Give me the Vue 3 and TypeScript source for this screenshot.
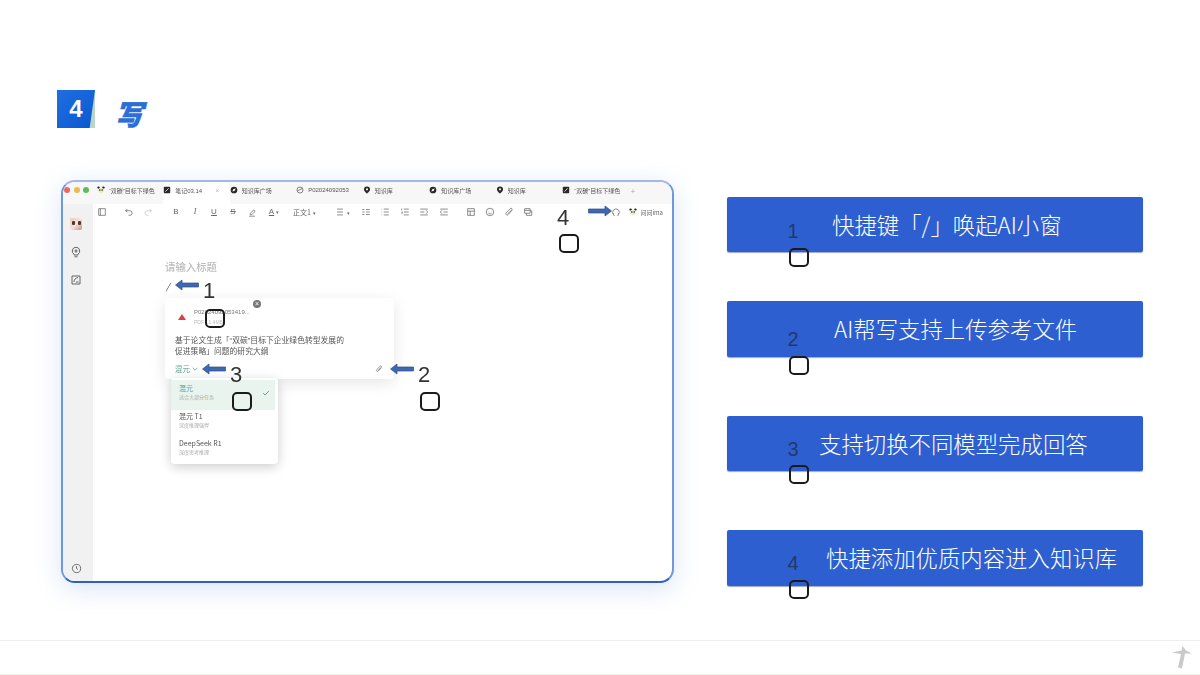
<script setup lang="ts">
interface Tab { kind: string; label: string; active?: boolean }
const tabs: Tab[] = [
  { kind: 'panda', label: '“双碳”目标下绿色' },
  { kind: 'note', label: '笔记03.14', active: true },
  { kind: 'dark', label: '知识库广场' },
  { kind: 'pdf', label: 'P02024092053' },
  { kind: 'pin', label: '知识库' },
  { kind: 'dark', label: '知识库广场' },
  { kind: 'pin', label: '知识库' },
  { kind: 'note', label: '“双碳”目标下绿色' },
]
const ic: Record<string, string> = {
  panel: 'M4 4h16v16H4zM8 4v16',
  undo: 'M8 5 4 9l4 4M4 9h10a5 5 0 0 1 0 11h-3',
  redo: 'M16 5l4 4-4 4M20 9H10a5 5 0 0 0 0 11h3',
  mark: 'M8 15l8-8a3 3 0 0 1 2 5l-6 6H8zM5 22h14',
  list: 'M5 5h14M5 12h14M5 19h14',
  todo: 'M3 6h5M3 18h5M12 6h9M12 18h9M12 12h9M3 12h5',
  ul: 'M4 5h1M4 12h1M4 19h1M9 5h12M9 12h12M9 19h12',
  ol: 'M4 4v4M4 12h2l-2 3h2M9 5h12M9 12h12M9 19h12',
  indent: 'M3 5h18M3 19h18M3 12h10M17 8l4 4-4 4',
  outdent: 'M3 5h18M3 19h18M11 12h10M7 8l-4 4 4 4',
  table: 'M4 4h16v16H4zM4 10h16M10 10v10',
  emoji: 'M12 3a9 9 0 1 0 0 18 9 9 0 0 0 0-18zM8 10h.5M15.5 10h.5M8 14.500c2 2.500 6 2.500 8 0',
  clip: 'M19 8 10 18a3 3 0 0 1-5-4L15 4a2 2 0 0 1 4 3L9 16',
  copy: 'M4 4h13v11H4zM8 15v5h13V9h-4M4 8h13',
  refresh: 'M6 18a8 8 0 1 1 12 0M6 18v-3M6 20h3M18 18v-3M18 20h-3',
  bulb: 'M12 2.500a7.500 7.500 0 0 0-4 13.800V18h8v-1.700A7.500 7.500 0 0 0 12 2.500zM9 21.500h6M12 6.500v7M8.500 10h7',
  edit: 'M4 4h16v16H4zM8 16c0-5 3-8 8-9M12 16h5',
  clock: 'M12 3a9 9 0 1 0 0 18 9 9 0 0 0 0-18zM12 7v5l3 2',
}
const group3 = ['B', 'I', 'U', 'S']
const group5 = ['todo', 'ul', 'ol', 'indent', 'outdent']
const group6 = ['table', 'emoji', 'clip', 'copy']
const models = [
  { name: '混元', sub: '适合大部分任务', on: true },
  { name: '混元 T1', sub: '深度推理强悍' },
  { name: 'DeepSeek R1', sub: '深度思考推理' },
]
const cards = [
  { text: '快捷键「/」唤起AI小窗', pad: 105, gap: 0, h: 55 },
  { text: 'AI帮写支持上传参考文件', pad: 107, gap: 49, h: 56 },
  { text: '支持切换不同模型完成回答', pad: 92, gap: 59, h: 55 },
  { text: '快捷添加优质内容进入知识库', pad: 99, gap: 59, h: 56 },
]
const marks = [
  { n: '1', x: 209, y: 291, bx: 205, by: 309, dark: false },
  { n: '2', x: 424, y: 375, bx: 420, by: 392, dark: false },
  { n: '3', x: 236, y: 375, bx: 232, by: 392, dark: false },
  { n: '4', x: 563, y: 218, bx: 559, by: 234, dark: false },
  { n: '1', x: 793, y: 231, bx: 789, by: 248, dark: true },
  { n: '2', x: 793, y: 339, bx: 789, by: 356, dark: true },
  { n: '3', x: 793, y: 449, bx: 789, by: 465, dark: true },
  { n: '4', x: 793, y: 563, bx: 789, by: 580, dark: true },
]
const arrows = [
  { x: 175, y: 279, flip: false },
  { x: 390, y: 363, flip: false },
  { x: 202, y: 363, flip: false },
  { x: 588, y: 205, flip: true },
]
</script>

<template>
  <div class="slide">
    <header class="head">
      <div class="badge-wrap">
        <div class="badge-shadow"></div>
        <div class="badge">4</div>
      </div>
      <h1 class="title">写</h1>
    </header>

    <main class="main">
      <section class="win">
        <div class="tabbar">
          <div class="lights"><i class="r"></i><i class="y"></i><i class="g"></i></div>
          <div v-for="(t, i) in tabs" :key="i" class="tab" :class="{ active: t.active }">
            <svg v-if="t.kind === 'panda'" class="tico" viewBox="0 0 10 10">
              <circle cx="2" cy="2" r="1.500" fill="#222" /><circle cx="8" cy="2" r="1.500" fill="#222" />
              <circle cx="5" cy="5.500" r="3.500" fill="#e8efc8" /><circle cx="3.500" cy="5" r="1" fill="#222" /><circle cx="6.500" cy="5" r="1" fill="#222" />
            </svg>
            <svg v-else-if="t.kind === 'note'" class="tico" viewBox="0 0 10 10">
              <rect x="1" y="1" width="8" height="8" rx="1" fill="#2a2a2a" /><path d="M3 7l4-4" stroke="#fff" stroke-width="1" />
            </svg>
            <svg v-else-if="t.kind === 'dark'" class="tico" viewBox="0 0 10 10">
              <circle cx="5" cy="5" r="4.200" fill="#2a2a2a" /><path d="M3 7l1-3 3-1-1 3z" fill="#fff" />
            </svg>
            <svg v-else-if="t.kind === 'pdf'" class="tico" viewBox="0 0 10 10">
              <circle cx="5" cy="5" r="3.800" fill="none" stroke="#666" stroke-width="1" /><path d="M2 6l6-3" stroke="#666" />
            </svg>
            <svg v-else class="tico" viewBox="0 0 10 10">
              <path d="M5 .5a3.800 3.800 0 0 1 3.800 3.800C8.800 6.500 5 9.500 5 9.500S1.200 6.500 1.200 4.300A3.800 3.800 0 0 1 5 .5z" fill="#2a2a2a" /><circle cx="5" cy="4.200" r="1.300" fill="#fff" />
            </svg>
            <span class="tlabel">{{ t.label }}</span>
            <span v-if="t.active" class="tclose">×</span>
          </div>
          <span class="plus">+</span>
        </div>

        <div class="body">
          <aside class="side">
            <div class="avatar"><i></i><i></i></div>
            <svg class="sico" viewBox="0 0 24 24"><path :d="ic.bulb" /></svg>
            <svg class="sico" viewBox="0 0 24 24"><path :d="ic.edit" /></svg>
            <svg class="sico clock" viewBox="0 0 24 24"><path :d="ic.clock" /></svg>
          </aside>

          <div class="doc">
            <div class="toolbar">
              <svg class="ico" viewBox="0 0 24 24"><path :d="ic.panel" /></svg>
              <div class="grp g2">
                <svg class="ico" viewBox="0 0 24 24"><path :d="ic.undo" /></svg>
                <svg class="ico light" viewBox="0 0 24 24"><path :d="ic.redo" /></svg>
              </div>
              <div class="grp g3">
                <span v-for="c in group3" :key="c" class="fmt" :class="'f' + c">{{ c }}</span>
                <svg class="ico" viewBox="0 0 24 24"><path :d="ic.mark" /></svg>
                <span class="fmt fA">A<em>▾</em></span>
              </div>
              <span class="para">正文1<em>▾</em></span>
              <span class="lst">
                <svg class="ico" viewBox="0 0 24 24"><path :d="ic.list" /></svg><em>▾</em>
              </span>
              <div class="grp g5">
                <svg v-for="k in group5" :key="k" class="ico" viewBox="0 0 24 24"><path :d="ic[k]" /></svg>
              </div>
              <div class="grp g6">
                <svg v-for="k in group6" :key="k" class="ico" viewBox="0 0 24 24"><path :d="ic[k]" /></svg>
              </div>
              <div class="tright">
                <svg class="ico" viewBox="0 0 24 24"><path :d="ic.refresh" /></svg>
                <span class="ima">
                  <svg class="tico" viewBox="0 0 10 10">
                    <circle cx="2" cy="2" r="1.500" fill="#222" /><circle cx="8" cy="2" r="1.500" fill="#222" />
                    <circle cx="5" cy="5.500" r="3.500" fill="#e8efc8" /><circle cx="3.500" cy="5" r="1" fill="#222" /><circle cx="6.500" cy="5" r="1" fill="#222" />
                  </svg>问问ima
                </span>
              </div>
            </div>

            <div class="editor">
              <div class="doc-title">请输入标题</div>
              <div class="slash">/</div>
              <div class="popup">
                <span class="pclose">×</span>
                <div class="file">
                  <div class="fthumb"><i></i></div>
                  <div>
                    <div class="fname">P02024092053419...</div>
                    <div class="fmeta">PDF · 1.4MB</div>
                  </div>
                </div>
                <p class="prompt">基于论文生成「“双碳”目标下企业绿色转型发展的<br />促进策略」问题的研究大纲</p>
                <div class="pfoot">
                  <span class="model">混元
                    <svg viewBox="0 0 10 10"><path d="M2 3.500 5 6.500 8 3.500" /></svg>
                  </span>
                  <svg class="pclip" viewBox="0 0 24 24"><path :d="ic.clip" /></svg>
                </div>
                <div class="menu">
                  <div v-for="m in models" :key="m.name" class="mitem" :class="{ on: m.on }">
                    <div>
                      <div class="mname">{{ m.name }}</div>
                      <div class="msub">{{ m.sub }}</div>
                    </div>
                    <svg v-if="m.on" class="check" viewBox="0 0 10 10"><path d="M1.500 5.200 4 7.500 8.500 2.500" /></svg>
                  </div>
                </div>
              </div>
            </div>
          </div>
        </div>
      </section>

      <section class="cards">
        <div
          v-for="c in cards"
          :key="c.text"
          class="card"
          :style="{ paddingLeft: c.pad + 'px', marginTop: c.gap + 'px', height: c.h + 'px' }"
        >{{ c.text }}</div>
      </section>
    </main>

    <footer class="foot">
      <svg class="logo" viewBox="0 0 20 23">
        <path d="M0 6.500 9.500 4.500 10.500 0 14 4.500 20 7.500 13 7.500 10 22.500 6 21.500 9 8z" fill="#cacaca" />
      </svg>
    </footer>

    <template v-for="(m, i) in marks" :key="i">
      <span class="mk-n" :class="{ dark: m.dark }" :style="{ left: m.x + 'px', top: m.y + 'px' }">{{ m.n }}</span>
      <span class="mk-b" :style="{ left: m.bx + 'px', top: m.by + 'px' }"></span>
    </template>
    <svg
      v-for="(a, i) in arrows"
      :key="'a' + i"
      class="arrow"
      :class="{ flip: a.flip }"
      :style="{ left: a.x + 'px', top: a.y + 'px' }"
      viewBox="0 0 24 12"
    >
      <path d="M.5 6 7 1v3h16.500v4H7v3z" />
    </svg>
  </div>
</template>

<style>
html, body { margin: 0; background: #fff; }
</style>

<style scoped>
.slide {
  position: relative;
  width: 1200px;
  height: 675px;
  overflow: hidden;
  background: #fff;
  display: flex;
  flex-direction: column;
  font-family: "Noto Sans CJK SC", "Liberation Sans", sans-serif;
}
.head {
  display: flex;
  align-items: center;
  gap: 20px;
  height: 38px;
  padding: 90px 0 0 57px;
}
.badge-wrap { position: relative; width: 38px; height: 38px; }
.badge-shadow {
  position: absolute;
  inset: 0;
  background: #b9d6c8;
}
.badge {
  position: absolute;
  inset: 0;
  background: linear-gradient(135deg, #1f6fe0, #0a58d0);
  clip-path: polygon(0 0, 100% 0, 86% 100%, 0 100%);
  color: #fff;
  font: bold 24px/38px "Liberation Sans", sans-serif;
  text-align: center;
  box-sizing: border-box;
}
.title {
  margin: 0;
  font-size: 28px;
  font-weight: 900;
  font-style: italic;
  line-height: 38px;
  color: #2a6ed6;
  -webkit-text-stroke: .5px #2a6ed6;
  position: relative;
  top: 4px;
}
.main {
  display: flex;
  gap: 53px;
  padding-left: 61px;
  margin-top: 52px;
}
.win {
  width: 613px;
  height: 403px;
  box-sizing: border-box;
  border: 2px solid #6f97e0;
  border-top-color: #a3b8e6;
  border-bottom-color: #2f5fc0;
  border-radius: 14px;
  background: #fff;
  box-shadow: 0 6px 26px rgba(90, 130, 210, .22);
  overflow: hidden;
  display: flex;
  flex-direction: column;
  filter: blur(.35px);
}
.tabbar {
  height: 22px;
  flex: none;
  box-sizing: border-box;
  background: #f7f7f7;
  display: flex;
  align-items: stretch;
  font-size: 6px;
  color: #555;
}
.lights {
  display: flex;
  align-items: center;
  gap: 3.500px;
  width: 33.700px;
  padding: 0 0 6px 1px;
  box-sizing: border-box;
}
.lights i { width: 6px; height: 6px; border-radius: 50%; }
.lights .r { background: #e9685f; }
.lights .y { background: #eebb4a; }
.lights .g { background: #5cbd5a; }
.tab {
  width: 66.500px;
  flex: none;
  display: flex;
  align-items: center;
  gap: 4px;
  padding-bottom: 6px;
  box-sizing: border-box;
  white-space: nowrap;
  overflow: hidden;
  font-family: "Liberation Sans", "Noto Sans CJK SC", sans-serif;
}
.tab.active { background: #fff; border-radius: 5px 5px 0 0; }
.tico { width: 8px; height: 8px; flex: none; }
.tlabel { overflow: hidden; max-width: 46px; }
.tclose { margin-left: 9px; color: #bbb; font-size: 7px; }
.plus { display: flex; align-items: center; padding-bottom: 6px; margin-left: 2px; color: #aaa; font-size: 8px; }
.body { flex: 1; display: flex; min-height: 0; }
.side {
  width: 30px;
  flex: none;
  background: #f1f1f1;
  display: flex;
  flex-direction: column;
  align-items: center;
  gap: 16px;
  padding: 14px 4px 7px 0;
  box-sizing: border-box;
}
.avatar {
  width: 12px;
  height: 12px;
  border-radius: 2px;
  background: linear-gradient(135deg, #efc9b8, #f5e4da 50%, #c98f7f);
  display: flex;
  justify-content: center;
  gap: 3px;
  padding-top: 3px;
  box-sizing: border-box;
}
.avatar i { width: 3px; height: 4px; background: #4a3a3a; border-radius: 1px; }
.sico { width: 12px; height: 12px; fill: none; stroke: #555; stroke-width: 1.800; }
.clock { margin-top: auto; width: 11px; height: 11px; }
.doc { flex: 1; display: flex; flex-direction: column; min-width: 0; }
.toolbar {
  height: 16px;
  flex: none;
  display: flex;
  align-items: center;
  padding: 0 9px 0 4px;
  color: #666;
  font-size: 8px;
}
.ico { width: 10px; height: 10px; flex: none; fill: none; stroke: #666; stroke-width: 1.800; }
.ico.light { stroke: #c4c4c4; }
.grp { display: flex; align-items: center; gap: 9px; }
.g2 { margin-left: 17px; }
.g3 { margin-left: 18px; }
.fmt { width: 10px; text-align: center; font-family: "Liberation Sans", sans-serif; font-size: 8px; line-height: 10px; }
.fI { font-style: italic; font-family: "Liberation Serif", serif; }
.fU { text-decoration: underline; }
.fS { text-decoration: line-through; }
.fA { text-decoration: underline; white-space: nowrap; width: 16px; }
em { font-style: normal; font-size: 5px; margin-left: 2px; display: inline-block; text-decoration: none; }
.para { margin-left: 11px; font-size: 7px; white-space: nowrap; }
.lst { margin-left: 19px; display: flex; align-items: center; }
.g5 { margin-left: 11px; gap: 9.500px; }
.g6 { margin-left: 17px; }
.tright { margin-left: auto; display: flex; align-items: center; gap: 8px; }
.ima { display: flex; align-items: center; gap: 3px; font-size: 6px; white-space: nowrap; }
.editor { flex: 1; padding: 40px 0 0 72px; }
.doc-title { font-size: 10.400px; line-height: 14px; font-weight: 500; color: #bdbdbd; }
.slash { font-size: 9px; line-height: 12px; margin-top: 7px; color: #444; font-style: italic; padding-left: 1px; }
.popup {
  position: relative;
  width: 229px;
  height: 81px;
  margin-top: 5px;
  box-sizing: border-box;
  padding: 8px 10px 0;
  background: #fff;
  border-radius: 4px;
  box-shadow: 0 4px 16px rgba(0, 0, 0, .1);
}
.pclose {
  position: absolute;
  left: 88px;
  top: 2px;
  width: 8px;
  height: 8px;
  border-radius: 50%;
  background: #777;
  color: #fff;
  font: 7px/8px "Liberation Sans", sans-serif;
  text-align: center;
}
.file { display: flex; align-items: center; gap: 6px; height: 22px; }
.fthumb { width: 13px; display: flex; justify-content: center; }
.fthumb i {
  width: 0;
  height: 0;
  border-left: 4px solid transparent;
  border-right: 4px solid transparent;
  border-bottom: 6px solid #d8414a;
}
.fname { font-size: 6px; line-height: 8px; color: #777; font-family: "Liberation Sans", sans-serif; }
.fmeta { font-size: 5px; line-height: 8px; color: #bbb; font-family: "Liberation Sans", sans-serif; margin-top: 2px; }
.prompt {
  margin: 7px 0 0;
  font-family: "Liberation Sans", "Noto Sans CJK SC", sans-serif;
  font-size: 7.800px;
  line-height: 11px;
  color: #555;
}
.pfoot { display: flex; justify-content: space-between; align-items: center; margin-top: 6px; }
.model { display: flex; align-items: center; gap: 1px; font-size: 7.500px; color: #5f9f8c; }
.model svg { width: 8px; height: 8px; fill: none; stroke: #5f9f8c; stroke-width: 1; }
.pclip { width: 8px; height: 8px; fill: none; stroke: #666; stroke-width: 2; margin-right: 1px; }
.menu {
  position: absolute;
  left: 6px;
  top: 80px;
  width: 107px;
  height: 86px;
  padding-top: 2px;
  box-sizing: border-box;
  background: #fff;
  border-radius: 4px;
  box-shadow: 0 3px 12px rgba(0, 0, 0, .2);
  z-index: 2;
}
.mitem {
  height: 27px;
  padding: 1px 5px 0 8px;
  display: flex;
  justify-content: space-between;
  align-items: flex-start;
  box-sizing: border-box;
}
.mitem.on { background: #e9f4ee; height: 30px; padding-top: 3px; margin-right: 3px; }
.mname { font-size: 7px; line-height: 10px; color: #555; }
.mitem.on .mname { color: #5f9f8c; }
.msub { font-size: 5px; line-height: 8px; color: #aaa; }
.check { width: 8px; height: 8px; margin: 6px 0 0; fill: none; stroke: #5f9f8c; stroke-width: 1.200; }
.cards { width: 416px; padding-top: 17px; }
.card {
  box-sizing: border-box;
  display: flex;
  align-items: center;
  background: #2e5fd0;
  border-radius: 2px;
  box-shadow: 0 1px 1px rgba(40, 60, 120, .45);
  color: #fff;
  font-size: 22.400px;
  font-weight: 300;
  white-space: nowrap;
  padding-bottom: 2px;
}
.foot {
  margin-top: auto;
  height: 35px;
  flex: none;
  border-top: 1px solid #eee;
  border-bottom: 1px solid #eef3df;
  box-sizing: border-box;
  display: flex;
  justify-content: flex-end;
  align-items: center;
  padding: 0 8px 0 0;
}
.logo { width: 20px; height: 23px; }
.mk-n {
  position: absolute;
  transform: translate(-50%, -50%);
  font: 22px/24px "Liberation Sans", sans-serif;
  color: #333;
}
.mk-n.dark { color: #22396a; font-size: 20px; }
.mk-b {
  position: absolute;
  width: 16px;
  height: 15px;
  border: 2px solid #1b1b1b;
  border-radius: 5px;
}
.arrow {
  position: absolute;
  width: 24px;
  height: 12px;
  fill: #3e68b0;
  stroke: #2c4f8c;
  stroke-width: .7;
}
.arrow.flip { transform: scaleX(-1); }
</style>
